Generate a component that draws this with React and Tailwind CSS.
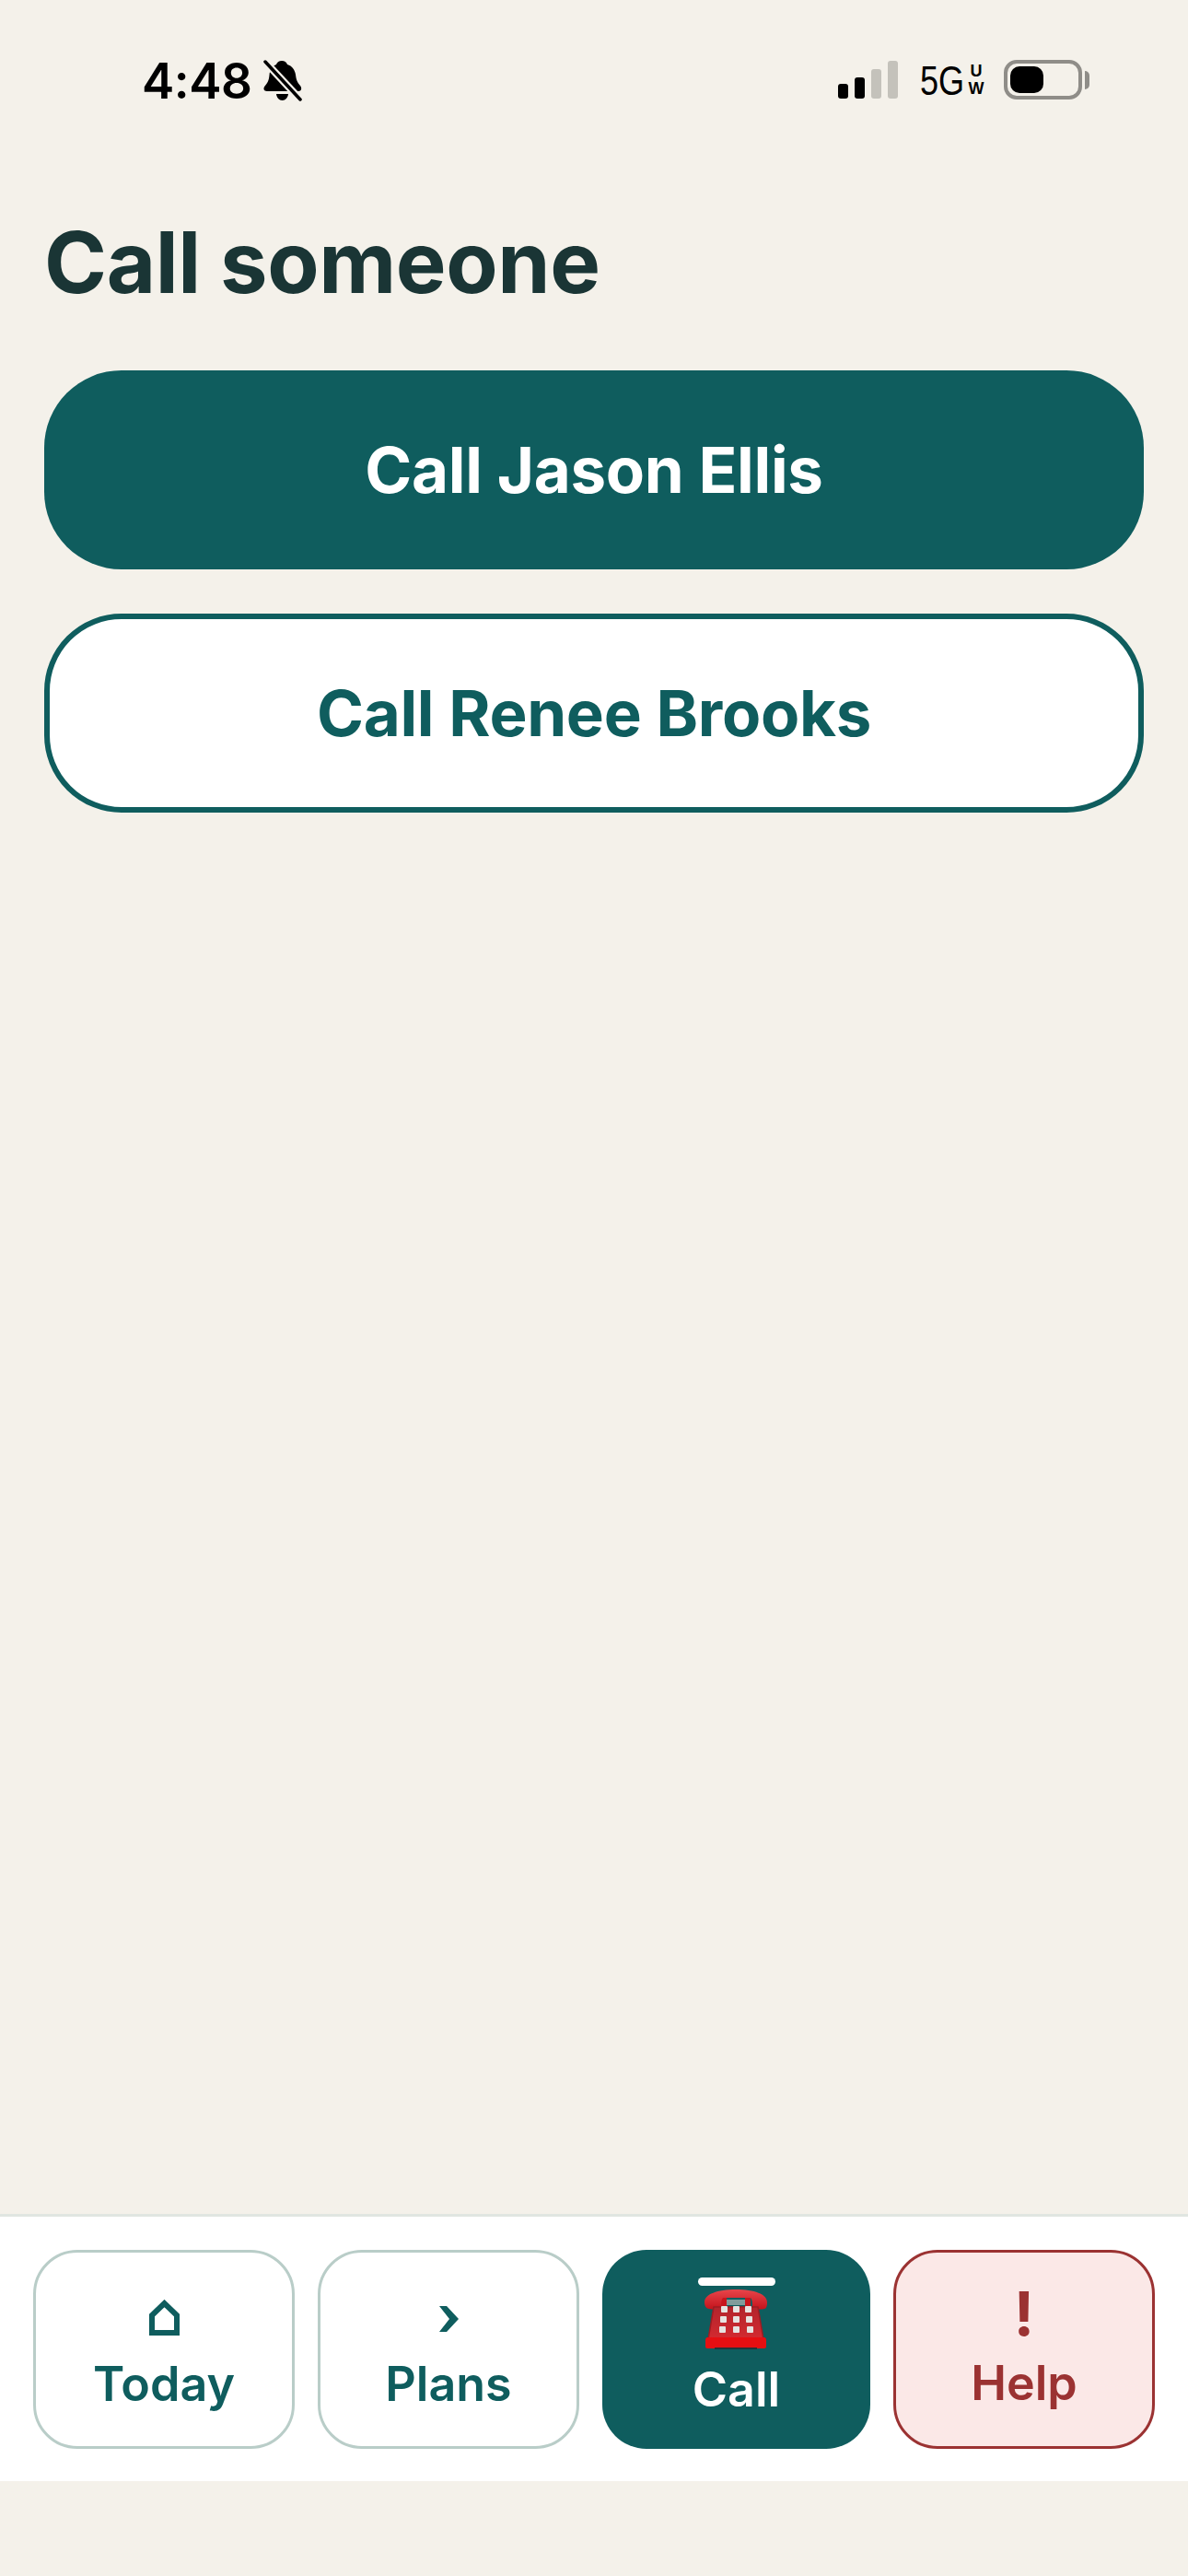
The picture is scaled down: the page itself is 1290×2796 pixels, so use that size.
const INTER = 'font-[Inter,"Noto_Sans",sans-serif]'

function MutedBell() {
  return (
    <svg width="44" height="46" viewBox="0 0 44 46" className="ml-[12px]">
      <path d="M21 1c3 0 5 1.500 6 4 5 1.500 8 5.500 9 11 .6 5 1.500 8 5 12 2 2.500 1.500 6-2 6H5c-3.500 0-4.500-3-2.500-5.500 3-3.500 4.500-6 5-12C8 10 11 6.500 15 5c1-2.500 3-4 6-4z" fill="#000" />
      <path d="M15 37h13c-.5 4-3 7-6.500 7S15.500 41 15 37z" fill="#000" />
      <path d="M2 1l40 43" stroke="#f4f1ea" strokeWidth="8" />
      <path d="M3 2l38 41" stroke="#000" strokeWidth="3.500" strokeLinecap="round" />
    </svg>
  )
}

function StatusBar() {
  return (
    <div className={`flex h-[130px] items-start justify-between pl-[154px] pr-[107px] pt-[56px] ${INTER}`}>
      <div className="flex items-center">
        <span className="text-[53px] leading-[64px] font-semibold tracking-[-0.5px] text-black">4:48</span>
        <MutedBell />
      </div>
      <div className="flex items-start pt-[9px]">
        <div className="flex items-end gap-[7px] h-[41px] mt-[1px]">
          <div className="w-[11px] h-[16px] rounded-[3px] bg-black" />
          <div className="w-[11px] h-[23px] rounded-[3px] bg-black" />
          <div className="w-[11px] h-[32px] rounded-[3px] bg-[#c4c2bb]" />
          <div className="w-[11px] h-[41px] rounded-[3px] bg-[#c4c2bb]" />
        </div>
        <div className="ml-[24px] flex h-[44px] w-[70px] items-center font-['Liberation_Sans',sans-serif] text-black">
          <span className="w-[47px] origin-left scale-x-[0.82] text-[44px] leading-none font-medium whitespace-nowrap mt-[1px]">5G</span>
          <div className="ml-[5px] flex w-[18px] flex-col items-center text-[18px] leading-[19px] font-bold">
            <span>U</span>
            <span>W</span>
          </div>
        </div>
        <div className="ml-[21px] flex items-center">
          <div className="h-[43px] w-[85px] rounded-[14px] border-[4px] border-[#8f8d88] p-[3px]">
            <div className="h-full w-[36px] rounded-[10px] bg-black" />
          </div>
          <div className="ml-[3px] h-[20px] w-[5px] rounded-r-full bg-[#8f8d88]" />
        </div>
      </div>
    </div>
  )
}

function PhoneEmoji() {
  return (
    <svg width="70" height="66" viewBox="0 0 70 66" className="mt-[3px] -translate-x-[1px]">
      <defs>
        <linearGradient id="phoneBody" x1="0" y1="0" x2="0" y2="1">
          <stop offset="0" stopColor="#b3242c" />
          <stop offset="1" stopColor="#d32a30" />
        </linearGradient>
        <linearGradient id="phoneHandset" x1="0" y1="0" x2="0" y2="1">
          <stop offset="0" stopColor="#e8454a" />
          <stop offset="1" stopColor="#c4131c" />
        </linearGradient>
      </defs>
      <path d="M19 8h6v12h-6zM45 8h6v12h-6z" fill="#c8141c" />
      <rect x="25" y="12" width="20" height="6" fill="#7f9c9b" />
      <path d="M1 15C1 6 15 1 35 1s34 5 34 14c0 4-1 7-3 7-4 1-12 1-13-2 0-4 0-8-2-10H21c-2 2-2 6-2 10-1 3-9 3-13 2-3 0-5-3-5-7z" fill="url(#phoneHandset)" />
      <path d="M11 20h48l6 35H5z" fill="url(#phoneBody)" stroke="#9e1b22" strokeWidth="1.500" />
      <path d="M4 53h62c1 0 2 1 2 3v7c0 1-1 2-2 2H4c-1 0-2-1-2-2v-7c0-2 1-3 2-3z" fill="#e50f12" />
      <rect x="12" y="64" width="46" height="2" fill="#23343a" />
      {[19, 29, 39].flatMap((y, r) => [19 - r, 32, 45 + r].map(x => (
        <rect key={`${x}-${y}`} x={x} y={y + r} width="7" height="7" rx="1" fill="#e6e3e1" />
      )))}
    </svg>
  )
}

function TabButton({ label, className, icon, labelClass = '' }) {
  return (
    <button className={`flex h-[216px] flex-col items-center rounded-[48px] ${className}`}>
      {icon}
      <span className={`text-[52px] leading-[60px] font-semibold ${labelClass}`}>{label}</span>
    </button>
  )
}

export default function App() {
  return (
    <div className={`flex h-[2796px] w-[1290px] flex-col bg-[#f4f1ea] ${INTER}`}>
      <StatusBar />

      <main className="flex flex-1 flex-col px-[48px]">
        <h1 className="mt-[100px] text-[92px] leading-[110px] font-bold tracking-[-0.4px] text-[#1a3535]">Call someone</h1>
        <button className="mt-[62px] h-[216px] rounded-[84px] bg-[#0f5d5e] pt-[2px] text-[69px] font-bold tracking-[-0.3px] text-white">
          Call Jason Ellis
        </button>
        <button className="mt-[48px] h-[216px] rounded-[84px] border-[6px] border-[#0f5d5e] bg-white pt-[2px] text-[69px] font-bold tracking-[-0.3px] text-[#0f5d5e]">
          Call Renee Brooks
        </button>
      </main>

      <nav className="grid grid-cols-[1fr_1fr_291px_1fr] gap-[25px] border-t-[3px] border-[#e0e6e1] bg-white px-[36px] pt-[36px] pb-[35px]">
        <TabButton
          label="Today"
          className="border-[3px] border-[#b9cdc8] bg-white text-[#0f5d5e]"
          icon={
            <svg width="33" height="39" viewBox="0 0 33 39" className="mt-[51px] mb-[23px]">
              <path d="M3 36V17L16.500 4 30 17v19z" fill="none" stroke="#0f5d5e" strokeWidth="6" />
            </svg>
          }
        />
        <TabButton
          label="Plans"
          className="border-[3px] border-[#b9cdc8] bg-white text-[#0f5d5e]"
          icon={
            <svg width="21" height="28" viewBox="0 0 21 28" className="mt-[58px] mb-[27px]">
              <path d="M0 0h8l13 14L8 28H0l11-14z" fill="#0f5d5e" />
            </svg>
          }
        />
        <TabButton
          label="Call"
          className="bg-[#0f5d5e] text-white"
          labelClass="mt-[14px]"
          icon={
            <div className="mt-[30px] flex flex-col items-center">
              <div className="h-[9px] w-[84px] rounded-full bg-white" />
              <PhoneEmoji />
            </div>
          }
        />
        <TabButton
          label="Help"
          className="border-[3px] border-[#9b3232] bg-[#fbe8e7] text-[#9b3232]"
          icon={<span className="mt-[27px] mb-[7px] h-[78px] text-[66px] leading-[78px] font-bold">!</span>}
        />
      </nav>
      <div className="h-[103px]" />
    </div>
  )
}
